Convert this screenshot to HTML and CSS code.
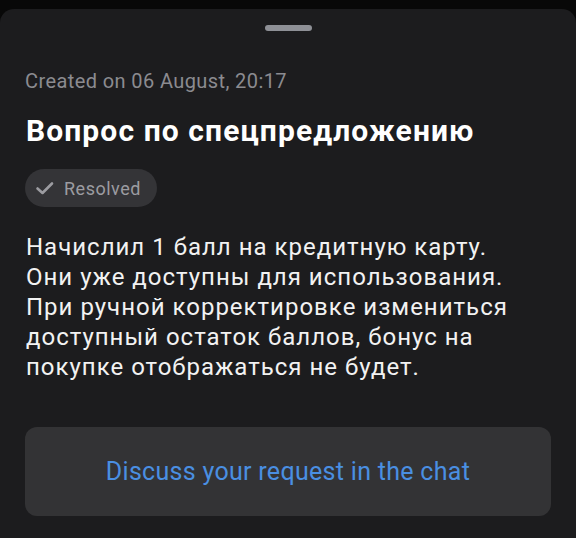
FILE: index.html
```html
<!DOCTYPE html>
<html lang="en">

<head>
    <meta charset="UTF-8">
    <meta name="viewport" content="width=device-width, initial-scale=1.0">
    <title>Request</title>
    <link rel="stylesheet" href="styles.css">
</head>

<body>
    <div class="sheet">
        <div class="handle"></div>
        <p class="created">Created on 06 August, 20:17</p>
        <h2 class="title">Вопрос по спецпредложению</h2>
        <div class="status">
            <svg class="check" width="20" height="20" viewBox="0 0 20 20">
                <path d="M2.5 10.5 L7.5 15 L17 5.5" fill="none" stroke="#9c9ca1" stroke-width="2.6" stroke-linecap="round" stroke-linejoin="round" />
            </svg>
            <span>Resolved</span>
        </div>
        <p class="message">Начислил 1 балл на кредитную карту. Они уже доступны для использования. При ручной корректировке измениться доступный остаток баллов, бонус на покупке отображаться не будет.</p>
        <button class="chat-btn">Discuss your request in the chat</button>
    </div>
</body>

</html>
```

FILE: styles.css
```css
body {
    margin: 0;
    background-color: #080808;
    font-family: Roboto, "Noto Sans", sans-serif;
}

.sheet {
    margin-top: 9px;
    height: 529px;
    background-color: #1c1c1e;
    border-radius: 14px 14px 0 0;
    padding: 16px 25px 0 25px;
    box-sizing: border-box;
}

.handle {
    width: 47px;
    height: 6px;
    margin: 0 auto;
    background-color: #8e9096;
    border-radius: 3px;
}

.created {
    margin: 38px 0 0 0;
    font-size: 20px;
    line-height: 24px;
    letter-spacing: 0.4px;
    color: #8b8b90;
}

.title {
    margin: 20px 0 0 1px;
    font-size: 30px;
    line-height: 36px;
    letter-spacing: 1.1px;
    font-weight: bold;
    color: #ffffff;
}

.status {
    display: inline-flex;
    align-items: center;
    gap: 9px;
    margin-top: 20px;
    height: 38px;
    padding: 0 16px 0 10px;
    background-color: #343437;
    border-radius: 19px;
    color: #9c9ca1;
    font-size: 18px;
    letter-spacing: 0.5px;
}

.message {
    margin: 25px 0 0 1px;
    width: 505px;
    font-size: 24px;
    line-height: 30px;
    letter-spacing: 1px;
    color: #f2f2f2;
}

.chat-btn {
    display: block;
    width: 100%;
    height: 89px;
    margin-top: 45px;
    background-color: #333335;
    border: none;
    border-radius: 12px;
    color: #4a8fe2;
    font-family: Roboto, "Noto Sans", sans-serif;
    font-size: 25px;
    letter-spacing: 0.3px;
    cursor: pointer;
}
```
